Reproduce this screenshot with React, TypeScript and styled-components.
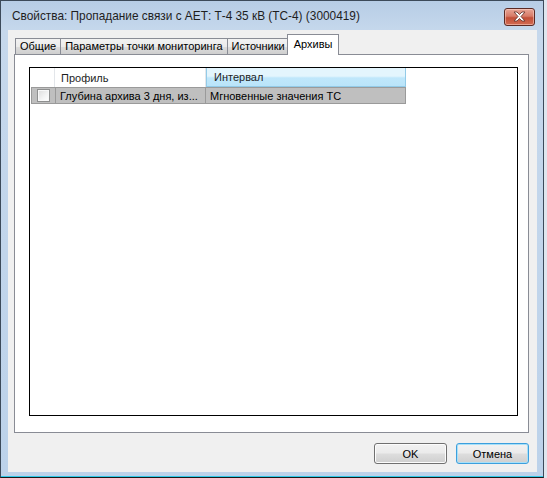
import React from "react";
import styled, { createGlobalStyle } from "styled-components";

const Global = createGlobalStyle`
  html, body { margin: 0; padding: 0; background: #dfe6ee; }
  body { width: 547px; height: 478px; overflow: hidden; }
  * { box-sizing: border-box; }
`;

const Window = styled.div`
  width: 544px;
  height: 478px;
  border: 1px solid #3c4a5a;
  border-bottom-color: #1a1a1a;
  background: linear-gradient(180deg, #b7cde6 0px, #c6d8ec 30px, #bcd2ea 100%);
  display: flex;
  flex-direction: column;
  padding: 0 6px 6px 7px;
  box-shadow: inset 0 -1px 0 #2ec8e8;
`;

const TitleBar = styled.div`
  height: 29px;
  display: flex;
  align-items: center;
  justify-content: space-between;
  padding: 0 2px 0 4px;
  flex-shrink: 0;
`;

const Title = styled.div`
  font-family: "Liberation Sans", Arial, sans-serif;
  font-size: 11.85px;
  color: #1e1e1e;
  white-space: nowrap;
  padding-top: 1px;
`;

const CloseButton = styled.div`
  width: 31px;
  height: 18px;
  margin-top: 2px;
  border: 1px solid #5b2a24;
  border-radius: 3px;
  background: linear-gradient(180deg, #e8a596 0%, #d77b68 45%, #c24f38 55%, #d26b52 100%);
  box-shadow: inset 0 0 0 1px rgba(255, 220, 210, 0.5);
  display: flex;
  align-items: center;
  justify-content: center;
`;

const Client = styled.div`
  flex: 1;
  background: #f0f0f0;
  display: flex;
  flex-direction: column;
  padding: 4px 8px 8px 6px;
`;

const TabStrip = styled.div`
  display: flex;
  align-items: flex-end;
  height: 20px;
  padding-left: 2px;
  position: relative;
  z-index: 1;
`;

const Tab = styled.div<{ $active?: boolean }>`
  font-family: "Liberation Sans", Arial, sans-serif;
  font-size: 11px;
  color: #000;
  white-space: nowrap;
  border: 1px solid #898c95;
  border-bottom: none;
  margin-left: -1px;
  ${(p) =>
    p.$active
      ? `
    height: 21px;
    margin: 0 -2px -1px -3px;
    padding: 3px 6px 0 6px;
    background: #ffffff;
    position: relative;
    z-index: 2;
  `
      : `
    height: 16px;
    padding: 1px 4px 0 4px;
    background: linear-gradient(180deg, #f2f2f2 0%, #ebebeb 50%, #dddddd 51%, #cfcfcf 100%);
  `}
`;

const Panel = styled.div`
  height: 379px;
  border: 1px solid #898c95;
  background: #ffffff;
  padding: 12px 10px 16px 14px;
  display: flex;
`;

const List = styled.div`
  flex: 1;
  border: 1px solid #000;
  background: #fff;
  display: flex;
  flex-direction: column;
  padding: 0 1px;
`;

const HeaderRow = styled.div`
  display: flex;
  height: 19px;
  flex-shrink: 0;
`;

const HeaderCell = styled.div<{ $w: number; $hot?: boolean }>`
  width: ${(p) => p.$w}px;
  font-family: "Liberation Sans", Arial, sans-serif;
  font-size: 11px;
  color: #1e1e1e;
  display: flex;
  align-items: center;
  padding-left: 6px;
  white-space: nowrap;
  border-right: 1px solid #e3e6ea;
  ${(p) =>
    p.$hot
      ? `
    background: linear-gradient(180deg, #e3f5fd 0%, #e3f5fd 45%, #bfe7fb 55%, #bae4f9 100%);
    border-left: 1px solid #93cbe8;
    border-right: 1px solid #93cbe8;
    border-bottom: 1px solid #93cbe8;
    padding-left: 7px;
  `
      : `
    background: #ffffff;
  `}
`;

const Row = styled.div`
  display: flex;
  height: 17px;
  flex-shrink: 0;
`;

const Cell = styled.div<{ $w: number }>`
  width: ${(p) => p.$w}px;
  background: #bfbfbf;
  border: 1px solid #9a9a9a;
  border-left: none;
  font-family: "Liberation Sans", Arial, sans-serif;
  font-size: 11px;
  color: #000;
  display: flex;
  align-items: center;
  padding-left: 4px;
  white-space: nowrap;
  overflow: hidden;
  &:first-child {
    border-left: 1px solid #9a9a9a;
    justify-content: center;
    padding-left: 0;
  }
`;

const Check = styled.div`
  width: 13px;
  height: 13px;
  border: 1px solid #8e8f8f;
  background: linear-gradient(135deg, #dcdcdc 0%, #f4f4f4 60%, #ffffff 100%);
  box-shadow: inset 0 0 0 1px #f8f8f8;
`;

const Footer = styled.div`
  display: flex;
  justify-content: flex-end;
  gap: 9px;
  padding-top: 10px;
`;

const Button = styled.div<{ $default?: boolean }>`
  width: 73px;
  height: 21px;
  border-radius: 3px;
  border: 1px solid ${(p) => (p.$default ? "#3c9fdd" : "#707070")};
  background: linear-gradient(180deg, #f2f2f2 0%, #ebebeb 48%, #dddddd 52%, #cfcfcf 100%);
  box-shadow: inset 0 0 0 1px ${(p) => (p.$default ? "#a8e0f8" : "#fcfcfc")};
  font-family: "Liberation Sans", Arial, sans-serif;
  font-size: 11px;
  color: #000;
  display: flex;
  align-items: center;
  justify-content: center;
`;

export default function App() {
  return (
    <>
      <Global />
      <Window>
        <TitleBar>
          <Title>Свойства: Пропадание связи с АЕТ: Т-4 35 кВ (ТС-4) (3000419)</Title>
          <CloseButton>
            <svg width="13" height="11" viewBox="0 0 13 11">
              <path
                d="M1 1 L4 1 L6.5 3.5 L9 1 L12 1 L8 5.5 L12 10 L9 10 L6.5 7.5 L4 10 L1 10 L5 5.5 Z"
                fill="#ffffff"
                stroke="#6b3b34"
                strokeWidth="0.9"
                strokeLinejoin="round"
              />
            </svg>
          </CloseButton>
        </TitleBar>
        <Client>
          <TabStrip>
            <Tab>Общие</Tab>
            <Tab>Параметры точки мониторинга</Tab>
            <Tab>Источники</Tab>
            <Tab $active>Архивы</Tab>
          </TabStrip>
          <Panel>
            <List>
              <HeaderRow>
                <HeaderCell $w={24} />
                <HeaderCell $w={151}>Профиль</HeaderCell>
                <HeaderCell $w={200} $hot>
                  Интервал
                </HeaderCell>
              </HeaderRow>
              <Row>
                <Cell $w={25}>
                  <Check />
                </Cell>
                <Cell $w={150}>Глубина архива 3 дня, из...</Cell>
                <Cell $w={200}>Мгновенные значения ТС</Cell>
              </Row>
            </List>
          </Panel>
          <Footer>
            <Button>OK</Button>
            <Button $default>Отмена</Button>
          </Footer>
        </Client>
      </Window>
    </>
  );
}
